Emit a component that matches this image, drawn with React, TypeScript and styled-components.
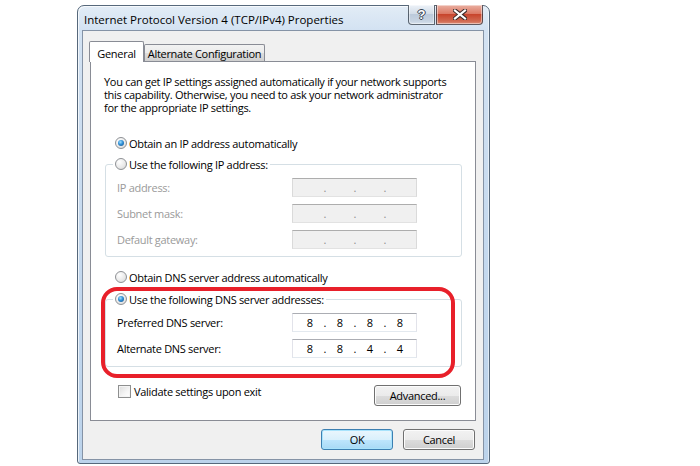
import React from 'react';
import styled, { createGlobalStyle } from 'styled-components';

const GlobalStyle = createGlobalStyle`
  html, body {
    margin: 0;
    padding: 0;
    background: #ffffff;
  }
  body {
    font-family: 'Open Sans', 'Noto Sans', sans-serif;
    font-size: 11px;
    letter-spacing: -0.3px;
    color: #000000;
  }
  * {
    box-sizing: border-box;
  }
`;

const Page = styled.div`
  width: 700px;
  height: 466px;
  overflow: hidden;
  padding: 5px 0 0 77px;
`;

const Window = styled.div`
  width: 413px;
  height: 459px;
  display: flex;
  flex-direction: column;
  padding: 0 5px 3px 4px;
  border: 1px solid #56687b;
  border-radius: 7px 7px 3px 3px;
  background: linear-gradient(180deg, #e2ecf6 0%, #d3e2f2 24px, #c3d8ee 60%, #bcd3eb 100%);
  box-shadow: inset 1px 1px 0 rgba(255, 255, 255, 0.7), inset -1px 0 0 rgba(255, 255, 255, 0.5);
`;

const TitleBar = styled.div`
  height: 24px;
  display: flex;
  align-items: flex-start;
`;

const Title = styled.div`
  flex: 1;
  padding: 6px 0 0 2px;
  font-size: 11.5px;
  letter-spacing: 0;
  line-height: 15px;
  color: #000;
  white-space: nowrap;
`;

const TitleButtons = styled.div`
  display: flex;
  gap: 1px;
  margin: -1px 1px 0 0;
`;

const CaptionButton = styled.div<{ $close?: boolean }>`
  width: ${({ $close }) => ($close ? '47px' : '27px')};
  height: 20px;
  display: flex;
  align-items: center;
  justify-content: center;
  border: 1px solid rgba(50, 60, 72, 0.75);
  border-top: none;
  border-radius: ${({ $close }) => ($close ? '0 0 4px 0' : '0 0 0 4px')};
  background: ${({ $close }) =>
    $close
      ? 'linear-gradient(180deg, #eab0a2 0%, #dc7a66 45%, #c8452d 50%, #d16a52 85%, #dd8e78 100%)'
      : 'linear-gradient(180deg, #edf2f8 0%, #d3dde8 45%, #bccadb 50%, #c7d4e2 85%, #d9e3ee 100%)'};
  box-shadow: inset 0 0 0 1px rgba(255, 255, 255, 0.45);
`;

const HelpGlyph = styled.span`
  font-family: 'Liberation Sans', sans-serif;
  font-weight: bold;
  font-size: 13px;
  letter-spacing: 0;
  color: #ffffff;
  text-shadow: 0 0 1px #3a4654, 1px 0 0 #3a4654, -1px 0 0 #3a4654, 0 1px 0 #3a4654, 0 -1px 0 #3a4654;
`;

const Content = styled.div`
  height: 430px;
  display: flex;
  flex-direction: column;
  padding-top: 10px;
  border: 1px solid #8593a6;
  background: #f0f0f0;
`;

const TabStrip = styled.div`
  height: 20px;
  display: flex;
  align-items: flex-end;
  padding-left: 6px;
  position: relative;
  z-index: 1;
`;

const Tab = styled.div<{ $active?: boolean }>`
  width: ${({ $active }) => ($active ? '55px' : '121px')};
  height: ${({ $active }) => ($active ? '21px' : '17px')};
  margin-bottom: ${({ $active }) => ($active ? '-1px' : '0')};
  padding-top: ${({ $active }) => ($active ? '2px' : '0')};
  display: flex;
  align-items: center;
  justify-content: center;
  border: 1px solid #898c95;
  border-bottom: none;
  border-radius: 2px 2px 0 0;
  background: ${({ $active }) =>
    $active ? '#ffffff' : 'linear-gradient(180deg, #f2f2f2 0%, #ebebeb 50%, #dddddd 51%, #cfcfcf 100%)'};
  white-space: nowrap;
`;

const Panel = styled.div`
  position: relative;
  height: 360px;
  margin: 0 7px;
  display: flex;
  flex-direction: column;
  border: 1px solid #898c95;
  background: #ffffff;
`;

const Intro = styled.div`
  margin-top: 13px;
  padding-left: 13px;
`;

const IntroLine = styled.div`
  height: 13px;
  line-height: 13px;
  white-space: nowrap;
`;

const OptionRow = styled.label<{ $top: number }>`
  height: 16px;
  display: flex;
  align-items: center;
  gap: 2px;
  margin-top: ${({ $top }) => $top}px;
  padding-left: 24px;
  white-space: nowrap;
`;

const Radio = styled.span<{ $checked?: boolean }>`
  width: 12px;
  height: 12px;
  border-radius: 50%;
  border: 1px solid #8e9195;
  display: flex;
  align-items: center;
  justify-content: center;
  flex-shrink: 0;
  background: radial-gradient(circle at 35% 30%, #ffffff 0%, #e8e8e8 60%, #cfcfcf 100%);
  &::after {
    content: '';
    width: 6px;
    height: 6px;
    border-radius: 50%;
    display: ${({ $checked }) => ($checked ? 'block' : 'none')};
    background: radial-gradient(circle at 40% 35%, #9fe0ff 0%, #2f8ed6 45%, #154e84 100%);
  }
`;

const Group = styled.fieldset<{ $top: number; $bottom: number }>`
  margin: ${({ $top }) => $top}px 13px 0 14px;
  padding: 6px 0 ${({ $bottom }) => $bottom}px 11px;
  border: 1px solid #d5dfe5;
  border-radius: 3px;
  min-width: 0;
`;

const Legend = styled.legend`
  height: 16px;
  margin-left: -4px;
  padding: 0 2px;
  display: flex;
  align-items: center;
  gap: 2px;
  white-space: nowrap;
`;

const FieldGrid = styled.div`
  display: grid;
  grid-template-columns: 175px 125px;
  grid-auto-rows: 19px;
  row-gap: 7px;
  align-items: center;
`;

const FieldLabel = styled.span<{ $disabled?: boolean }>`
  color: ${({ $disabled }) => ($disabled ? '#9a9a9a' : '#000000')};
  white-space: nowrap;
`;

const IpBox = styled.div<{ $disabled?: boolean }>`
  height: 19px;
  display: flex;
  align-items: center;
  padding-left: 6px;
  border: 1px solid;
  border-color: ${({ $disabled }) =>
    $disabled ? '#adadad #dadada #e2e2e2 #dadada' : '#abadb3 #e2e3ea #e3e9ef #e2e3ea'};
  background: ${({ $disabled }) => ($disabled ? '#f0f0f0' : '#ffffff')};
  color: ${({ $disabled }) => ($disabled ? '#8d8d8d' : '#000000')};
  letter-spacing: 0;
`;

const Octet = styled.span`
  width: 22px;
  text-align: center;
`;

const Dot = styled.span`
  width: 8px;
  text-align: center;
`;

const BottomRow = styled.div`
  margin-top: 18px;
  display: flex;
  justify-content: space-between;
  align-items: flex-start;
  padding: 0 14px 0 27px;
`;

const CheckLabel = styled.label`
  display: flex;
  align-items: center;
  gap: 3px;
  height: 13px;
  white-space: nowrap;
`;

const Checkbox = styled.span`
  width: 13px;
  height: 13px;
  border: 1px solid #8e8f8f;
  background: linear-gradient(135deg, #dcdcdc 0%, #f5f5f5 60%, #ffffff 100%);
  box-shadow: inset 0 0 0 1px #f4f4f4;
`;

const Button = styled.div<{ $width: number; $default?: boolean }>`
  width: ${({ $width }) => $width}px;
  height: 21px;
  display: flex;
  align-items: center;
  justify-content: center;
  border: 1px solid ${({ $default }) => ($default ? '#3c7fb1' : '#707070')};
  border-radius: 3px;
  background: ${({ $default }) =>
    $default
      ? 'linear-gradient(180deg, #eaf6fd 0%, #d9f0fc 50%, #bee6fd 51%, #a7d9f5 100%)'
      : 'linear-gradient(180deg, #f2f2f2 0%, #ebebeb 50%, #dddddd 51%, #cfcfcf 100%)'};
  box-shadow: inset 0 0 0 1px ${({ $default }) => ($default ? '#a8e3fc' : '#fcfcfc')};
  white-space: nowrap;
`;

const ButtonRow = styled.div`
  margin-top: 8px;
  display: flex;
  justify-content: flex-end;
  gap: 10px;
  padding-right: 8px;
`;

const Highlight = styled.div`
  position: absolute;
  left: 10px;
  top: 225px;
  width: 354px;
  height: 91px;
  border: 4px solid #e8202a;
  border-radius: 16px;
  pointer-events: none;
`;

const IpField = ({ octets, disabled }: { octets?: string[]; disabled?: boolean }) => {
  const parts = octets ?? ['', '', '', ''];
  return (
    <IpBox $disabled={disabled}>
      {parts.map((p, i) => (
        <React.Fragment key={i}>
          <Octet>{p}</Octet>
          {i < 3 && <Dot>.</Dot>}
        </React.Fragment>
      ))}
    </IpBox>
  );
};

export default function App() {
  return (
    <Page>
      <GlobalStyle />
      <Window>
        <TitleBar>
          <Title>Internet Protocol Version 4 (TCP/IPv4) Properties</Title>
          <TitleButtons>
            <CaptionButton>
              <HelpGlyph>?</HelpGlyph>
            </CaptionButton>
            <CaptionButton $close>
              <svg width="14" height="11" viewBox="0 0 14 11">
                <path d="M2 1.5 L12 9.5 M12 1.5 L2 9.5" stroke="#3a2a28" strokeWidth="4.2" strokeLinecap="square" />
                <path d="M2 1.5 L12 9.5 M12 1.5 L2 9.5" stroke="#ffffff" strokeWidth="2.2" strokeLinecap="square" />
              </svg>
            </CaptionButton>
          </TitleButtons>
        </TitleBar>
        <Content>
          <TabStrip>
            <Tab $active>General</Tab>
            <Tab>Alternate Configuration</Tab>
          </TabStrip>
          <Panel>
            <Intro>
              <IntroLine>You can get IP settings assigned automatically if your network supports</IntroLine>
              <IntroLine>this capability. Otherwise, you need to ask your network administrator</IntroLine>
              <IntroLine>for the appropriate IP settings.</IntroLine>
            </Intro>
            <OptionRow $top={21}>
              <Radio $checked />
              Obtain an IP address automatically
            </OptionRow>
            <Group $top={5} $bottom={7}>
              <Legend>
                <Radio />
                Use the following IP address:
              </Legend>
              <FieldGrid>
                <FieldLabel $disabled>IP address:</FieldLabel>
                <IpField disabled />
                <FieldLabel $disabled>Subnet mask:</FieldLabel>
                <IpField disabled />
                <FieldLabel $disabled>Default gateway:</FieldLabel>
                <IpField disabled />
              </FieldGrid>
            </Group>
            <OptionRow $top={12}>
              <Radio />
              Obtain DNS server address automatically
            </OptionRow>
            <Group $top={6} $bottom={8}>
              <Legend>
                <Radio $checked />
                Use the following DNS server addresses:
              </Legend>
              <FieldGrid>
                <FieldLabel>Preferred DNS server:</FieldLabel>
                <IpField octets={['8', '8', '8', '8']} />
                <FieldLabel>Alternate DNS server:</FieldLabel>
                <IpField octets={['8', '8', '4', '4']} />
              </FieldGrid>
            </Group>
            <BottomRow>
              <CheckLabel>
                <Checkbox />
                Validate settings upon exit
              </CheckLabel>
              <Button $width={87}>Advanced...</Button>
            </BottomRow>
            <Highlight />
          </Panel>
          <ButtonRow>
            <Button $width={72} $default>
              OK
            </Button>
            <Button $width={72}>Cancel</Button>
          </ButtonRow>
        </Content>
      </Window>
    </Page>
  );
}
